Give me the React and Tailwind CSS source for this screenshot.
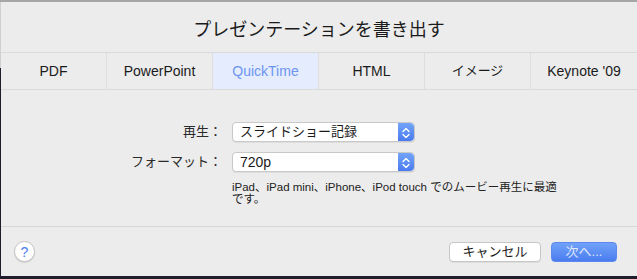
import React from "react";

const FONT = { fontFamily: '"Liberation Sans", "Noto Sans CJK JP", sans-serif' };

const TABS = ["PDF", "PowerPoint", "QuickTime", "HTML", "イメージ", "Keynote '09"];

function Stepper() {
  return (
    <div className="w-[16px] h-full rounded-r-[4px] bg-[linear-gradient(to_bottom,#72a4f8,#4a7bef)] grid place-items-center">
      <svg width="16" height="20" viewBox="0 0 16 20" fill="none">
        <path d="M5 8.5 L8 5.5 L11 8.5" stroke="white" strokeWidth="1.4" strokeLinecap="round" strokeLinejoin="round" />
        <path d="M5 11.5 L8 14.5 L11 11.5" stroke="white" strokeWidth="1.4" strokeLinecap="round" strokeLinejoin="round" />
      </svg>
    </div>
  );
}

function Popup({ children }) {
  return (
    <div className="w-[183px] h-[20px] flex bg-white border border-[#c9c9c9] rounded-[4px] shadow-[0_1px_0_rgba(0,0,0,0.06)] overflow-hidden">
      <div className="flex-1 flex items-center pl-[7px] text-[#1a1a1a]">{children}</div>
      <Stepper />
    </div>
  );
}

export default function App() {
  return (
    <div
      style={FONT}
      className="w-[637px] h-[279px] overflow-hidden flex flex-col border-t-2 border-t-[#a6a6a6] border-b-[3px] border-b-[#1d1d2b] pl-px bg-[linear-gradient(to_bottom,#d0d0d0_66px,#1d1d2b_66px)]"
    >
      <div className="flex-1 flex flex-col bg-[#ececec]">
        <div className="h-[50px] pt-[6px] flex items-center justify-center text-[18px] text-[#1a1a1a]">
          プレゼンテーションを書き出す
        </div>

        <div className="h-[38px] grid grid-cols-6 border-y border-[#dadada]">
          {TABS.map((t, i) => (
            <div
              key={t}
              className={`flex items-center justify-center ${i < 5 ? "border-r border-[#dedede]" : ""} ${
                t === "QuickTime" ? "bg-[#e4ecfd] text-[#6e94f1]" : "text-[#1a1a1a]"
              } ${t === "イメージ" ? "text-[13px]" : "text-[14px]"}`}
            >
              {t}
            </div>
          ))}
        </div>

        <div className="mt-[32px] grid grid-cols-[221px_auto] gap-x-[10px] gap-y-[10px] items-center">
          <div className="text-right text-[13px] text-[#2a2a2a]">再生：</div>
          <Popup>
            <span className="text-[13px]">スライドショー記録</span>
          </Popup>
          <div className="text-right text-[13px] text-[#2a2a2a]">フォーマット：</div>
          <Popup>
            <span className="text-[14px]">720p</span>
          </Popup>
          <div />
          <p className="w-[330px] -mt-[1px] text-[11.5px] leading-[12px] text-[#222]">
            iPad、iPad mini、iPhone、iPod touch でのムービー再生に最適です。
          </p>
        </div>

        <div className="mt-auto h-[50px] border-t border-[#d6d6d6] flex items-center pl-[13px] pr-[20px]">
          <div className="w-[21px] h-[21px] rounded-full bg-white border border-[#c4c4c4] shadow-[0_1px_1px_rgba(0,0,0,0.12)] grid place-items-center text-[14px] leading-none text-[#4a80f0]">
            ?
          </div>
          <div className="ml-auto flex items-center gap-[10px]">
            <button className="w-[92px] h-[20px] rounded-[4px] bg-white border border-[#c6c6c6] shadow-[0_1px_0_rgba(0,0,0,0.06)] text-[13px] text-[#1a1a1a] leading-none">
              キャンセル
            </button>
            <button className="w-[66px] h-[20px] rounded-[4px] bg-[linear-gradient(to_bottom,#70a2f8,#4b7cf0)] border border-[#5a88ef] text-[13px] text-[#dfe8fc] leading-none">
              次へ...
            </button>
          </div>
        </div>
      </div>
    </div>
  );
}
